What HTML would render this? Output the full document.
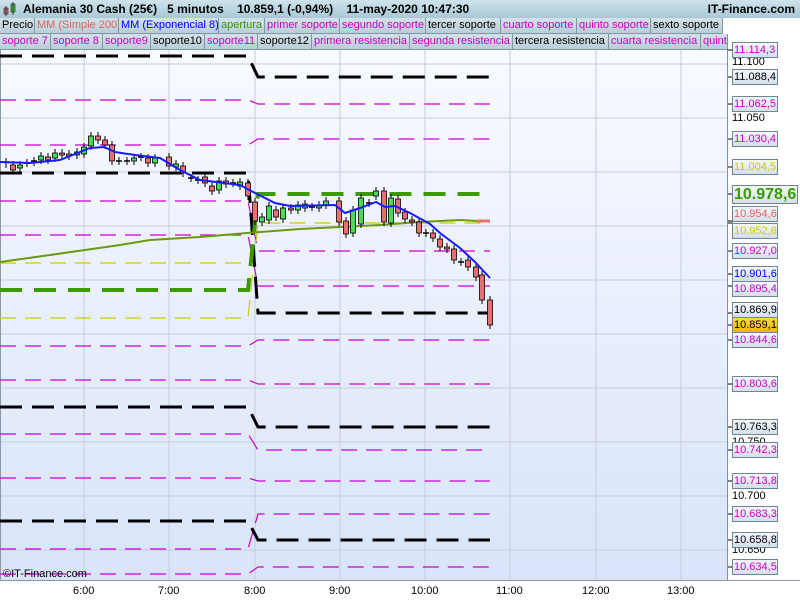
<!DOCTYPE html>
<html><head><meta charset="utf-8"><style>
*{margin:0;padding:0;box-sizing:border-box}
body{width:800px;height:600px;overflow:hidden;background:#fff;font-family:"Liberation Sans",Arial,sans-serif;position:relative}
#hdr{position:absolute;left:0;top:0;width:800px;height:18px;background:linear-gradient(#cfe3ec,#a8c8d6);font-weight:bold;font-size:12px;line-height:18px;color:#000}
#hdr span{position:absolute;top:0;white-space:nowrap}
.row{position:absolute;left:0;height:16px;font-size:11px;line-height:15px}
.row div{position:absolute;top:0;height:16px;background:linear-gradient(#d3e2e8,#b9ced7);border-right:1px solid #7f97a3;border-bottom:1px solid #7f97a3;padding-left:2px;white-space:nowrap;overflow:hidden}
.m{color:#cc00cc}
#plot{position:absolute;left:0;top:50px;width:727px;height:530px;background:linear-gradient(#f8faff,#d9e4fa);border-left:1px solid #8899aa}
#axisline{position:absolute;left:727px;top:50px;width:1px;height:530px;background:#7f919e}
.lb{position:absolute;left:732px;width:46px;height:16px;border:1px solid #6f8593;background:linear-gradient(#f4f8fc,#d4dfea);font-size:11px;line-height:14px;padding-left:1px;white-space:nowrap}
.tk{position:absolute;left:732px;font-size:11px;line-height:12px;color:#000}
.tm{position:absolute;font-size:11px;top:585px;color:#000}
</style></head><body>
<div id="hdr">
<svg style="position:absolute;left:3px;top:2px" width="14" height="15"><rect x="1" y="6" width="4" height="6" fill="#e06060" stroke="#333" stroke-width=".7"/><line x1="3" y1="4" x2="3" y2="14" stroke="#333"/><rect x="8" y="2" width="4" height="8" fill="#3c3" stroke="#333" stroke-width=".7"/><line x1="10" y1="0" x2="10" y2="13" stroke="#333"/></svg>
<span style="left:23px">Alemania 30 Cash (25€)&nbsp;&nbsp;&nbsp;5 minutos&nbsp;&nbsp;&nbsp;&nbsp;10.859,1 (-0,94%)&nbsp;&nbsp;&nbsp;&nbsp;11-may-2020 10:47:30</span>
<span style="right:5px">IT-Finance.com</span>
</div>
<div class="row" style="top:18px;width:723px">
<div style="left:0;width:35px">Precio</div>
<div style="left:35px;width:84px;color:#e06060">MM (Simple 200)</div>
<div style="left:119px;width:100px;color:#0000ff">MM (Exponencial 8)</div>
<div style="left:219px;width:46px;color:#3a9a00">apertura</div>
<div class="m" style="left:265px;width:75px">primer soporte</div>
<div class="m" style="left:340px;width:86px">segundo soporte</div>
<div style="left:426px;width:75px">tercer soporte</div>
<div class="m" style="left:501px;width:76px">cuarto soporte</div>
<div class="m" style="left:577px;width:74px">quinto soporte</div>
<div style="left:651px;width:72px">sexto soporte</div>
</div>
<div class="row" style="top:34px;width:728px">
<div class="m" style="left:0;width:51px">soporte 7</div>
<div class="m" style="left:51px;width:52px">soporte 8</div>
<div class="m" style="left:103px;width:48px">soporte9</div>
<div style="left:151px;width:54px">soporte10</div>
<div class="m" style="left:205px;width:53px">soporte11</div>
<div style="left:258px;width:54px">soporte12</div>
<div class="m" style="left:312px;width:98px">primera resistencia</div>
<div class="m" style="left:410px;width:103px">segunda resistencia</div>
<div style="left:513px;width:96px">tercera resistencia</div>
<div class="m" style="left:609px;width:92px">cuarta resistencia</div>
<div class="m" style="left:701px;width:27px">quinta</div>
</div>
<div id="plot"></div>
<svg id="sv" style="position:absolute;left:0;top:0" width="800" height="600"></svg>
<div id="axisline"></div>
<div id="labels"></div>
<div style="position:absolute;left:3px;top:568px;font-size:11px;color:#000">©IT-Finance.com</div>
<span class="tm" style="left:73px">6:00</span><span class="tm" style="left:158px">7:00</span><span class="tm" style="left:244px">8:00</span><span class="tm" style="left:329px">9:00</span><span class="tm" style="left:411px">10:00</span><span class="tm" style="left:496px">11:00</span><span class="tm" style="left:582px">12:00</span><span class="tm" style="left:667px">13:00</span>
<script>
var s='';
[64,118,172,226,280,334,388,442,496,550].forEach(function(y){s+='<line x1="1" x2="727" y1="'+y+'" y2="'+y+'" stroke="#c5ccdd" stroke-width="1"/>';});
[84,169,255,340,425,510,596,681].forEach(function(x){s+='<line y1="50" y2="580" x1="'+x+'" x2="'+x+'" stroke="#c5ccdd" stroke-width="1"/>';});
function lvl(a,b,c,w,d){s+='<polyline fill="none" points="0,'+a+' 248,'+a+' 258,'+b+' 490,'+b+'" stroke="'+c+'" stroke-width="'+w+'" stroke-dasharray="'+d+'"/>';}
var M='#cc00cc';
[[100,104],[145,139],[201,251],[235,286],[346,340],[380,384],[434,450],[478,481],[549,514],[574,567]].forEach(function(p){lvl(p[0],p[1],M,1.2,'16,9');});
s+='<line x1="0" x2="248" y1="263" y2="263" stroke="#cccc00" stroke-width="1.2" stroke-dasharray="16,9"/>';
lvl(318,223,'#cccc00',1.2,'16,9');
[[56,77],[173,313],[407,427],[521,540]].forEach(function(p){lvl(p[0],p[1],'#000',3,'22,10');});
lvl(290,194,'#3a9a00',4,'22,12');
s+='<polyline fill="none" stroke="#6b9a10" stroke-width="2" points="0,262 50,255 120,245 150,240 200,237 247,233 300,229 380,225 420,222 460,220 477,221"/>';
s+='<line x1="477" x2="490" y1="221" y2="221" stroke="#e87070" stroke-width="3"/>';
var c=[[6,162,164,'c'],[13,165,170,'r'],[20,165,168,'g'],[27,163,163,'c'],[34,161,162,'c'],[41,156,160,'g'],[48,157,160,'r'],[55,153,158,'g'],[62,153,155,'r'],[69,154,156,'r'],[77,152,155,'g'],[84,147,154,'g'],[91,136,146,'g'],[98,136,140,'r'],[105,140,145,'r'],[112,145,161,'r'],[119,161,161,'c'],[127,161,161,'c'],[134,158,161,'g'],[141,157,157,'c'],[148,158,163,'r'],[155,158,163,'g'],[169,157,166,'r'],[176,164,167,'g'],[183,166,173,'r'],[191,178,178,'c'],[198,180,180,'c'],[205,177,183,'r'],[212,186,191,'r'],[219,181,190,'g'],[226,181,184,'r'],[233,183,183,'c'],[240,182,186,'g'],[248,183,196,'r'],[255,202,221,'r'],[262,217,222,'g'],[269,206,220,'g'],[276,210,217,'r'],[283,208,219,'g'],[291,208,210,'r'],[298,205,210,'g'],[305,204,208,'g'],[312,207,207,'c'],[319,205,208,'g'],[326,201,205,'g'],[339,201,222,'r'],[346,221,234,'r'],[353,210,233,'g'],[361,198,224,'g'],[369,203,203,'c'],[376,191,196,'g'],[384,191,222,'r'],[391,198,223,'g'],[398,199,213,'r'],[405,212,219,'r'],[412,220,222,'r'],[419,222,233,'r'],[426,233,233,'c'],[433,233,238,'r'],[440,239,247,'r'],[447,247,249,'r'],[454,249,260,'r'],[461,262,262,'c'],[468,260,267,'r'],[476,267,277,'r'],[482,275,300,'r'],[490,300,325,'r']];
c.forEach(function(k){var x=k[0],t=k[1],b=k[2],h=b-t;
s+='<line x1="'+x+'" x2="'+x+'" y1="'+(t-4)+'" y2="'+(b+4)+'" stroke="#000" stroke-width="1"/>';
if(k[3]=='c'){s+='<line x1="'+(x-3)+'" x2="'+(x+3)+'" y1="'+t+'" y2="'+t+'" stroke="#000" stroke-width="1.5"/>';}
else{s+='<rect x="'+(x-2.5)+'" y="'+t+'" width="5" height="'+Math.max(h,2)+'" fill="'+(k[3]=='g'?'#44dd55':'#e87070')+'" stroke="#000" stroke-width=".8"/>';}});
s+='<polyline fill="none" stroke="#1a1aff" stroke-width="2" points="0,162 30,163 60,160 90,148 104,147 115,152 135,155 160,158 180,170 200,180 240,185 255,193 275,203 290,206 335,205 345,213 360,208 376,202 385,207 395,206 410,213 430,224 440,233 460,248 475,262 490,278"/>';
[50,77,104,139,167,194,221,223,251,274,286,313,325,340,384,427,450,481,514,540,567].forEach(function(y){s+='<line x1="727" x2="733" y1="'+y+'" y2="'+y+'" stroke="#000"/>';});
s+='<line x1="0" x2="800" y1="580.5" y2="580.5" stroke="#8a9aa8"/>';
document.getElementById('sv').innerHTML=s;
var L=[[50,'11.114,3',M],[77,'11.088,4','#000'],[104,'11.062,5',M],[139,'11.030,4',M],[167,'11.004,5','#cccc00'],[214,'10.954,6','#e06060'],[231,'10.952,8','#cccc00'],[251,'10.927,0',M],[274,'10.901,6','#0000ff'],[289,'10.895,4',M],[310,'10.869,9','#000'],[340,'10.844,6',M],[384,'10.803,6',M],[427,'10.763,3','#000'],[450,'10.742,3',M],[481,'10.713,8',M],[514,'10.683,3',M],[540,'10.658,8','#000'],[567,'10.634,5',M]];
var h='';
[[62,'11.100'],[118,'11.050'],[334,'10.850'],[442,'10.750'],[496,'10.700'],[550,'10.650']].forEach(function(t){h+='<div class="tk" style="top:'+(t[0]-6)+'px">'+t[1]+'</div>';});
L.forEach(function(l){h+='<div class="lb" style="top:'+(l[0]-8)+'px;color:'+l[2]+'">'+l[1]+'</div>';});
h+='<div class="lb" style="top:317px;background:linear-gradient(#ffd84a,#f0b800);color:#000">10.859,1</div>';
h+='<div class="lb" style="top:185px;width:66px;height:19px;font-size:16px;font-weight:bold;line-height:17px;color:#3a9a00">10.978,6</div>';
document.getElementById('labels').innerHTML=h;
</script>
</body></html>
